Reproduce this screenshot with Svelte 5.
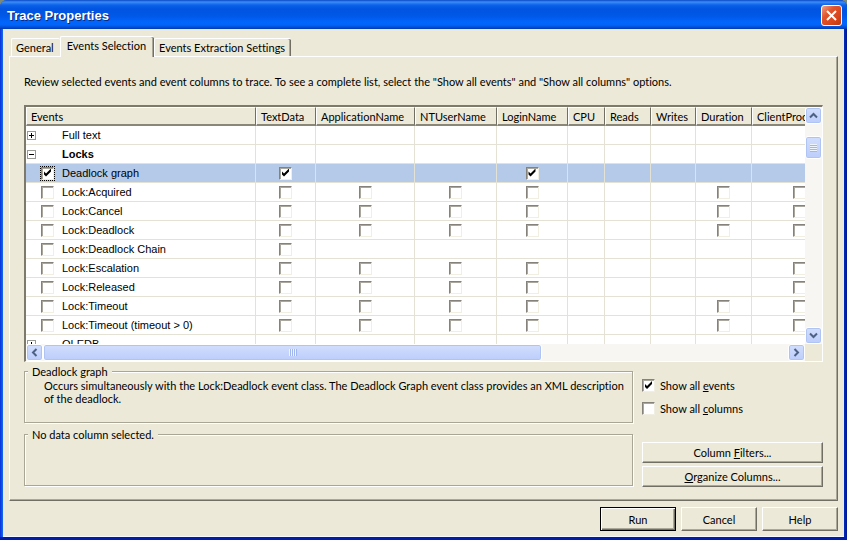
<script lang="ts">
	type Column = { name: string; width: number };
	type Row = {
		name: string;
		group?: boolean;
		open?: boolean;
		selected?: boolean;
		boxes?: string[];
		checked?: string[];
	};

	const columns: Column[] = [
		{ name: 'TextData', width: 60 },
		{ name: 'ApplicationName', width: 99 },
		{ name: 'NTUserName', width: 82 },
		{ name: 'LoginName', width: 71 },
		{ name: 'CPU', width: 37 },
		{ name: 'Reads', width: 46 },
		{ name: 'Writes', width: 45 },
		{ name: 'Duration', width: 56 },
		{ name: 'ClientProc', width: 95 }
	];

	const common = ['TextData', 'ApplicationName', 'NTUserName', 'LoginName', 'ClientProc'];
	const timed = [...common, 'Duration'];

	const rows: Row[] = [
		{ name: 'Full text', group: true },
		{ name: 'Locks', group: true, open: true },
		{
			name: 'Deadlock graph',
			selected: true,
			boxes: ['TextData', 'LoginName'],
			checked: ['TextData', 'LoginName']
		},
		{ name: 'Lock:Acquired', boxes: timed },
		{ name: 'Lock:Cancel', boxes: timed },
		{ name: 'Lock:Deadlock', boxes: timed },
		{ name: 'Lock:Deadlock Chain', boxes: ['TextData'] },
		{ name: 'Lock:Escalation', boxes: common },
		{ name: 'Lock:Released', boxes: common },
		{ name: 'Lock:Timeout', boxes: timed },
		{ name: 'Lock:Timeout (timeout > 0)', boxes: timed },
		{ name: 'OLEDB', group: true }
	];

	const eventWidth = 230;
	const tableWidth = columns.reduce((sum, column) => sum + column.width, eventWidth);
</script>

<div class="window">
	<header>
		<h1>Trace Properties</h1>
		<button class="close" aria-label="Close">
			<svg width="11" height="11" viewBox="0 0 11 11">
				<path d="M1 1L10 10M10 1L1 10" stroke="#fff" stroke-width="2" />
			</svg>
		</button>
	</header>

	<main>
		<div class="tabs" role="tablist">
			<button role="tab" aria-selected="false">General</button>
			<button role="tab" aria-selected="true" class="active">Events Selection</button>
			<button role="tab" aria-selected="false">Events Extraction Settings</button>
		</div>

		<section class="panel">
			<p class="intro">
				Review selected events and event columns to trace. To see a complete list, select the "Show
				all events" and "Show all columns" options.
			</p>

			<div class="grid">
				<div class="view">
					<table style="width: {tableWidth}px">
						<colgroup>
							<col style="width: {eventWidth}px" />
							{#each columns as column}
								<col style="width: {column.width}px" />
							{/each}
						</colgroup>
						<thead>
							<tr>
								<th>Events</th>
								{#each columns as column}
									<th>{column.name}</th>
								{/each}
							</tr>
						</thead>
						<tbody>
							{#each rows as row}
								<tr class:selected={row.selected} class:open={row.open}>
									<td>
										<div class="event">
											<span class="expand">
												{#if row.group}
													<button class="toggle" aria-label="Toggle {row.name}">
														<svg width="9" height="9" viewBox="0 0 9 9">
															<rect x=".5" y=".5" width="8" height="8" fill="#fff" stroke="#9a9a94" />
															<path d={row.open ? 'M2 4.5h5' : 'M2 4.5h5M4.5 2v5'} stroke="#000" />
														</svg>
													</button>
												{/if}
											</span>
											<span class="pick">
												{#if !row.group}
													<input type="checkbox" aria-label={row.name} checked={row.selected} />
												{/if}
											</span>
											<span>{row.name}</span>
										</div>
									</td>
									{#each columns as column}
										<td class="cell">
											{#if row.boxes?.includes(column.name)}
												<input
													type="checkbox"
													aria-label="{row.name} {column.name}"
													checked={row.checked?.includes(column.name)}
												/>
											{/if}
										</td>
									{/each}
								</tr>
							{/each}
						</tbody>
					</table>
				</div>
				<div class="vbar">
					<button class="arrow" aria-label="Scroll up">
						<svg width="9" height="9" viewBox="0 0 9 9"><path d="M1 6.5L4.5 3L8 6.5" /></svg>
					</button>
					<div class="vthumb"><i></i></div>
					<button class="arrow" aria-label="Scroll down">
						<svg width="9" height="9" viewBox="0 0 9 9"><path d="M1 2.5L4.5 6L8 2.5" /></svg>
					</button>
				</div>
				<div class="hbar">
					<button class="arrow" aria-label="Scroll left">
						<svg width="9" height="9" viewBox="0 0 9 9"><path d="M6.5 1L3 4.5L6.5 8" /></svg>
					</button>
					<div class="track"><div class="hthumb"><i></i></div></div>
					<button class="arrow" aria-label="Scroll right">
						<svg width="9" height="9" viewBox="0 0 9 9"><path d="M2.5 1L6 4.5L2.5 8" /></svg>
					</button>
				</div>
			</div>

			<div class="details">
				<div class="info">
					<fieldset>
						<legend>Deadlock graph</legend>
						<p>
							Occurs simultaneously with the Lock:Deadlock event class. The Deadlock Graph event
							class provides an XML description of the deadlock.
						</p>
					</fieldset>
					<fieldset>
						<legend>No data column selected.</legend>
					</fieldset>
				</div>
				<div class="options">
					<label><input type="checkbox" checked /><span>Show all <u>e</u>vents</span></label>
					<label><input type="checkbox" /><span>Show all <u>c</u>olumns</span></label>
					<button class="button wide first">Column <u>F</u>ilters...</button>
					<button class="button wide"><u>O</u>rganize Columns...</button>
				</div>
			</div>
		</section>

		<footer>
			<button class="button default">Run</button>
			<button class="button">Cancel</button>
			<button class="button">Help</button>
		</footer>
	</main>
</div>

<style>
	:global(body) {
		margin: 0;
		background: #7b8a78;
	}

	.window {
		display: flex;
		flex-direction: column;
		min-height: 100vh;
		box-sizing: border-box;
		padding: 0 3px 3px;
		border-radius: 7px 7px 0 0;
		background: linear-gradient(90deg, #0831d9, #166aee 3px, #0030c0 calc(100% - 3px), #00138c);
		box-shadow: inset 0 -3px #001ca8;
		font-family: Lato, 'Liberation Sans', sans-serif;
		font-size: 11px;
		font-variant-ligatures: none;
		line-height: 13px;
		color: #000;
		overflow: hidden;
	}

	button {
		font: inherit;
		color: inherit;
		padding: 0;
		border: 0;
	}

	p {
		margin: 0;
	}

	/* title bar */
	header {
		display: flex;
		align-items: center;
		justify-content: space-between;
		height: 29px;
		box-sizing: border-box;
		margin: 0 -3px;
		padding: 2px 5px 0 7px;
		background: linear-gradient(
			#0a48c4 0,
			#3c8cf8 2px,
			#0c62ea 5px,
			#0054e0 9px,
			#0058e8 16px,
			#0266fc 22px,
			#0264f8 25px,
			#0046c8 28px,
			#0038a8
		);
	}
	h1 {
		margin: 0;
		font-family: 'Liberation Sans', Arial, sans-serif;
		font-size: 13px;
		line-height: 16px;
		color: #fff;
		text-shadow: 1px 1px #0a2a80;
	}
	.close {
		display: flex;
		align-items: center;
		justify-content: center;
		width: 21px;
		height: 21px;
		box-sizing: border-box;
		border: 1px solid #fff;
		border-radius: 3px;
		background: linear-gradient(135deg, #f0a088, #e0552c 35%, #d8451c 70%, #b83a10);
	}

	main {
		flex: 1;
		padding: 7px 6px 5px;
		background: #ece9d8;
		border-bottom: 1px solid #f4f8ff;
	}

	.tabs {
		display: flex;
		align-items: flex-end;
		height: 20px;
		padding-left: 2px;
	}
	.tabs button {
		height: 18px;
		padding: 0 6px 0 4px;
		background: #ece9d8;
		border: solid #fff;
		border-width: 1px 0 0 1px;
		border-radius: 2px 2px 0 0;
		box-shadow: inset -1px 0 #716f64, inset -2px 0 #aca899;
	}
	.tabs button:first-child {
		box-shadow: none;
	}
	.tabs .active {
		height: 21px;
		margin-bottom: -1px;
		padding: 0 8px 3px 6px;
		z-index: 1;
	}

	.panel {
		padding: 18px 14px 13px;
		border: solid;
		border-width: 1px;
		border-color: #fff #716f64 #716f64 #fff;
		box-shadow: inset -1px -1px #aca899;
	}
	.intro {
		padding-bottom: 17px;
		white-space: nowrap;
	}

	/* event grid */
	.grid {
		display: grid;
		grid-template-columns: minmax(0, 1fr) 17px;
		grid-template-rows: 237px 17px;
		border: solid;
		border-width: 2px 1px 1px 2px;
		border-color: #7d7a6c #fff #fff #7d7a6c;
	}
	.view {
		overflow: hidden;
		background: #fff;
	}
	table {
		table-layout: fixed;
		border-collapse: separate;
		border-spacing: 0;
	}
	th,
	td {
		height: 19px;
		box-sizing: border-box;
		padding: 0;
		white-space: nowrap;
	}
	th {
		padding-left: 4px;
		font-weight: normal;
		text-align: left;
		background: #ece9d8;
		border: solid;
		border-width: 1px 1px 2px 1px;
		border-color: #fff #716f64 #8a8778 #fff;
	}
	td {
		font-family: 'Liberation Sans', Arial, sans-serif;
		border: solid #e4e2d4;
		border-width: 0 1px 1px 0;
	}
	.selected td {
		background: #b5cae8;
	}
	.open td {
		font-weight: bold;
	}
	.cell {
		text-align: center;
		line-height: 0;
	}
	.event {
		display: flex;
		align-items: center;
		height: 18px;
	}
	.expand {
		width: 14px;
		padding-left: 1px;
		box-sizing: border-box;
	}
	.toggle {
		display: block;
		background: none;
	}
	.toggle svg {
		display: block;
	}
	.pick {
		display: flex;
		width: 22px;
		padding-left: 1px;
		box-sizing: border-box;
	}
	.selected .pick input {
		outline: 1px dotted #000;
	}

	input {
		appearance: none;
		flex: none;
		width: 13px;
		height: 13px;
		margin: 0;
		padding: 1px;
		background: #fff;
		border: 1px solid;
		border-color: #84827a #f1efe2 #f1efe2 #84827a;
		box-shadow: inset 1px 1px #aaa89e;
		vertical-align: middle;
	}
	input:checked::before {
		content: '';
		display: block;
		width: 9px;
		height: 9px;
		background: #000;
		clip-path: polygon(1px 3px, 3px 5px, 8px 0, 8px 3px, 3px 8px, 1px 6px);
	}

	/* scroll bars */
	.vbar,
	.hbar {
		display: flex;
		background: #f7f6f2;
	}
	.vbar {
		flex-direction: column;
		justify-content: space-between;
	}
	.track {
		flex: 1;
	}
	.arrow,
	.vthumb,
	.hthumb {
		display: flex;
		align-items: center;
		justify-content: center;
		box-sizing: border-box;
		border: 1px solid #fff;
		border-radius: 3px;
		background: linear-gradient(#d2defd, #bccdfb);
		box-shadow: inset 0 0 0 1px #b0c4f4;
	}
	.arrow {
		width: 17px;
		height: 17px;
	}
	.arrow path {
		fill: none;
		stroke: #4d6185;
		stroke-width: 2;
	}
	.vthumb {
		height: 23px;
		margin: 12px 0 auto;
	}
	.hthumb {
		width: 67%;
		height: 17px;
	}
	.vthumb i {
		width: 7px;
		height: 8px;
		background: repeating-linear-gradient(#eef4fe 0 1px, #a0b6ee 1px 2px);
	}
	.hthumb i {
		width: 8px;
		height: 7px;
		background: repeating-linear-gradient(90deg, #eef4fe 0 1px, #a0b6ee 1px 2px);
	}

	/* description and options */
	.details {
		display: flex;
		gap: 9px;
		padding-top: 3px;
	}
	.info {
		flex: 1;
		display: flex;
		flex-direction: column;
		gap: 5px;
	}
	fieldset {
		height: 58px;
		box-sizing: border-box;
		margin: 0;
		padding: 0 8px 0 3px;
		border: 1px solid #a9a696;
		box-shadow: 1px 1px #fff, inset 1px 1px #fff;
	}
	legend {
		padding: 0 4px;
		background: #ece9d8;
	}
	fieldset p {
		padding: 1px 0 0 16px;
	}
	.options {
		width: 181px;
		display: flex;
		flex-direction: column;
	}
	.options label {
		display: flex;
		align-items: center;
		gap: 5px;
		height: 23px;
	}
	.options label:first-child {
		margin-top: 9px;
	}

	.button {
		width: 76px;
		height: 24px;
		background: #ece9d8;
		border: 1px solid;
		border-color: #fff #716f64 #716f64 #fff;
		box-shadow: inset -1px -1px #aca899;
	}
	.button.wide {
		width: 100%;
		height: 21px;
		margin-top: 3px;
	}
	.button.first {
		margin-top: 22px;
	}
	.button.default {
		border-color: #000;
		box-shadow: inset 1px 1px #fff, inset -1px -1px #716f64, inset -2px -2px #aca899;
	}

	footer {
		display: flex;
		justify-content: flex-end;
		gap: 5px;
		padding-top: 6px;
	}
</style>
